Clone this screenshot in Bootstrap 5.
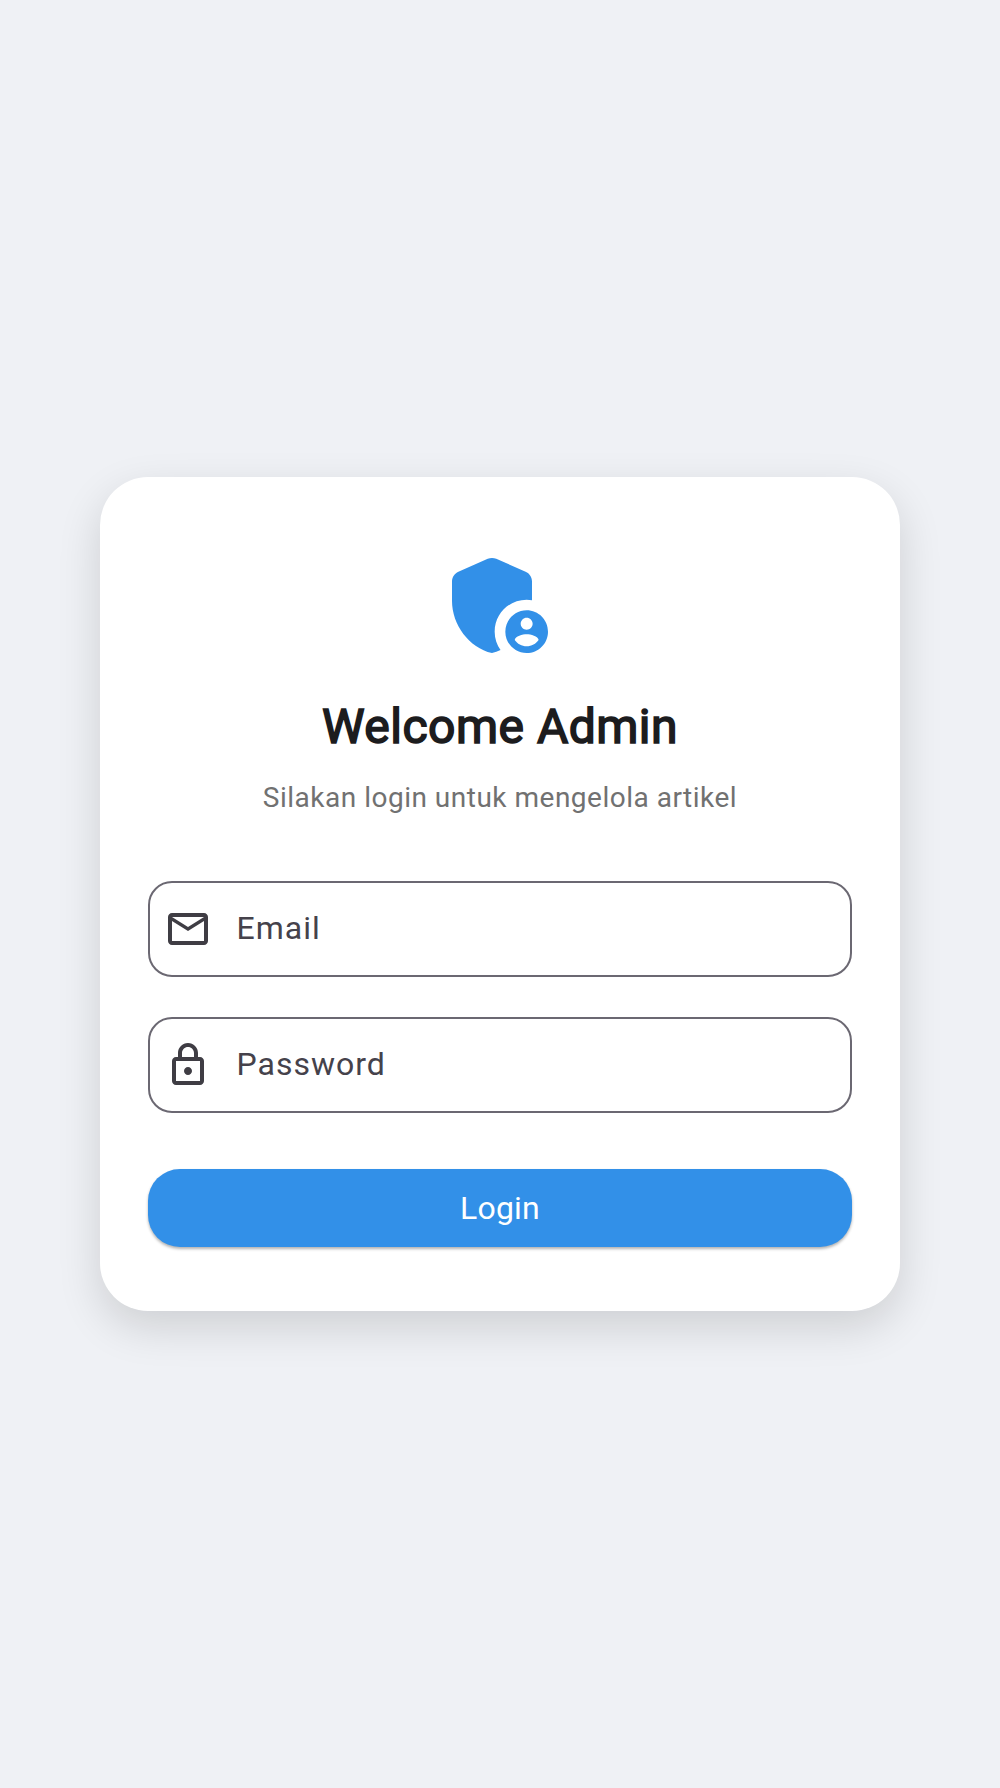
<!DOCTYPE html>
<html lang="id">
<head>
<meta charset="utf-8">
<meta name="viewport" content="width=device-width, initial-scale=1">
<title>Admin Login</title>
<link href="https://cdn.jsdelivr.net/npm/bootstrap@5.3.0/dist/css/bootstrap.min.css" rel="stylesheet">
<style>
body{background:#eff1f5;font-family:Roboto,"Liberation Sans",sans-serif;color:#1c1b1f}
.login-card{width:800px;border-radius:48px;padding:64px 48px;box-shadow:0 16px 44px rgba(0,0,0,.14)}
.title{font-size:48px;line-height:64px;font-weight:400;letter-spacing:.5px;color:#1c1c1e;-webkit-text-stroke:1.6px #1c1c1e;margin-top:26px}
.subtitle{font-size:28px;line-height:40px;letter-spacing:.5px;color:#717171;margin-top:19px}
.field-list{margin-top:63px;gap:40px}
.field{height:96px;border:2px solid #6b6872;border-radius:24px;padding-left:14px}
.field svg{width:48px;height:48px;fill:#3f3d44;flex:none}
.field .form-control,.field .form-control:focus{font-size:32px;line-height:48px;letter-spacing:1px;padding:0 24px 2px 24.5px;background:none;box-shadow:none;height:92px}
.field .form-control::placeholder{color:#45424b;opacity:1}
.btn-login,.btn-login:hover{height:78px;margin-top:56px;border:0;border-radius:32px;background:#3290e8;color:#fff;font-size:32px;line-height:40px;letter-spacing:.2px;box-shadow:0 2px 3px rgba(0,0,0,.3)}
</style>
</head>
<body>
<main class="min-vh-100 d-flex align-items-center justify-content-center">
<form class="login-card bg-white d-flex flex-column align-items-stretch">
<svg class="align-self-center" width="128" height="128" viewBox="0 0 24 24" fill="#3290e8" aria-hidden="true"><path d="M17 11c.34 0 .67.04 1 .09V7.58c0-.8-.47-1.52-1.2-1.83l-5.5-2.4c-.51-.22-1.09-.22-1.6 0l-5.5 2.4C3.47 6.07 3 6.79 3 7.58v3.6c0 4.54 3.2 8.79 7.5 9.82.55-.13 1.08-.32 1.6-.55C11.41 19.47 11 18.28 11 17c0-3.31 2.69-6 6-6z"/><path d="M17 13c-2.21 0-4 1.79-4 4s1.79 4 4 4 4-1.79 4-4-1.79-4-4-4zm0 1.38c.62 0 1.12.51 1.12 1.12s-.51 1.12-1.12 1.12-1.12-.51-1.12-1.12.5-1.12 1.12-1.12zm0 5.37c-.93 0-1.74-.46-2.24-1.17.05-.72 1.51-1.08 2.24-1.08s2.19.36 2.24 1.08c-.5.71-1.31 1.17-2.24 1.17z"/></svg>
<h1 class="title text-center mb-0">Welcome Admin</h1>
<p class="subtitle text-center mb-0">Silakan login untuk mengelola artikel</p>
<div class="field-list d-flex flex-column">
<div class="field d-flex align-items-center">
<svg viewBox="0 0 24 24" aria-hidden="true"><path d="M22 6c0-1.1-.9-2-2-2H4c-1.1 0-2 .9-2 2v12c0 1.1.9 2 2 2h16c1.1 0 2-.9 2-2V6zm-2 0l-8 5-8-5h16zm0 12H4V8l8 5 8-5v10z"/></svg>
<input type="email" class="form-control border-0" placeholder="Email" aria-label="Email">
</div>
<div class="field d-flex align-items-center">
<svg viewBox="0 0 24 24" aria-hidden="true"><path d="M18 8h-1V6c0-2.76-2.24-5-5-5S7 3.24 7 6v2H6c-1.1 0-2 .9-2 2v10c0 1.1.9 2 2 2h12c1.1 0 2-.9 2-2V10c0-1.1-.9-2-2-2zM9 6c0-1.66 1.34-3 3-3s3 1.34 3 3v2H9V6zm9 14H6V10h12v10zm-6-3c1.1 0 2-.9 2-2s-.9-2-2-2-2 .9-2 2 .9 2 2 2z"/></svg>
<input type="password" class="form-control border-0" placeholder="Password" aria-label="Password">
</div>
</div>
<button type="button" class="btn btn-login w-100">Login</button>
</form>
</main>
<script src="https://cdn.jsdelivr.net/npm/bootstrap@5.3.0/dist/js/bootstrap.bundle.min.js"></script>
</body>
</html>
